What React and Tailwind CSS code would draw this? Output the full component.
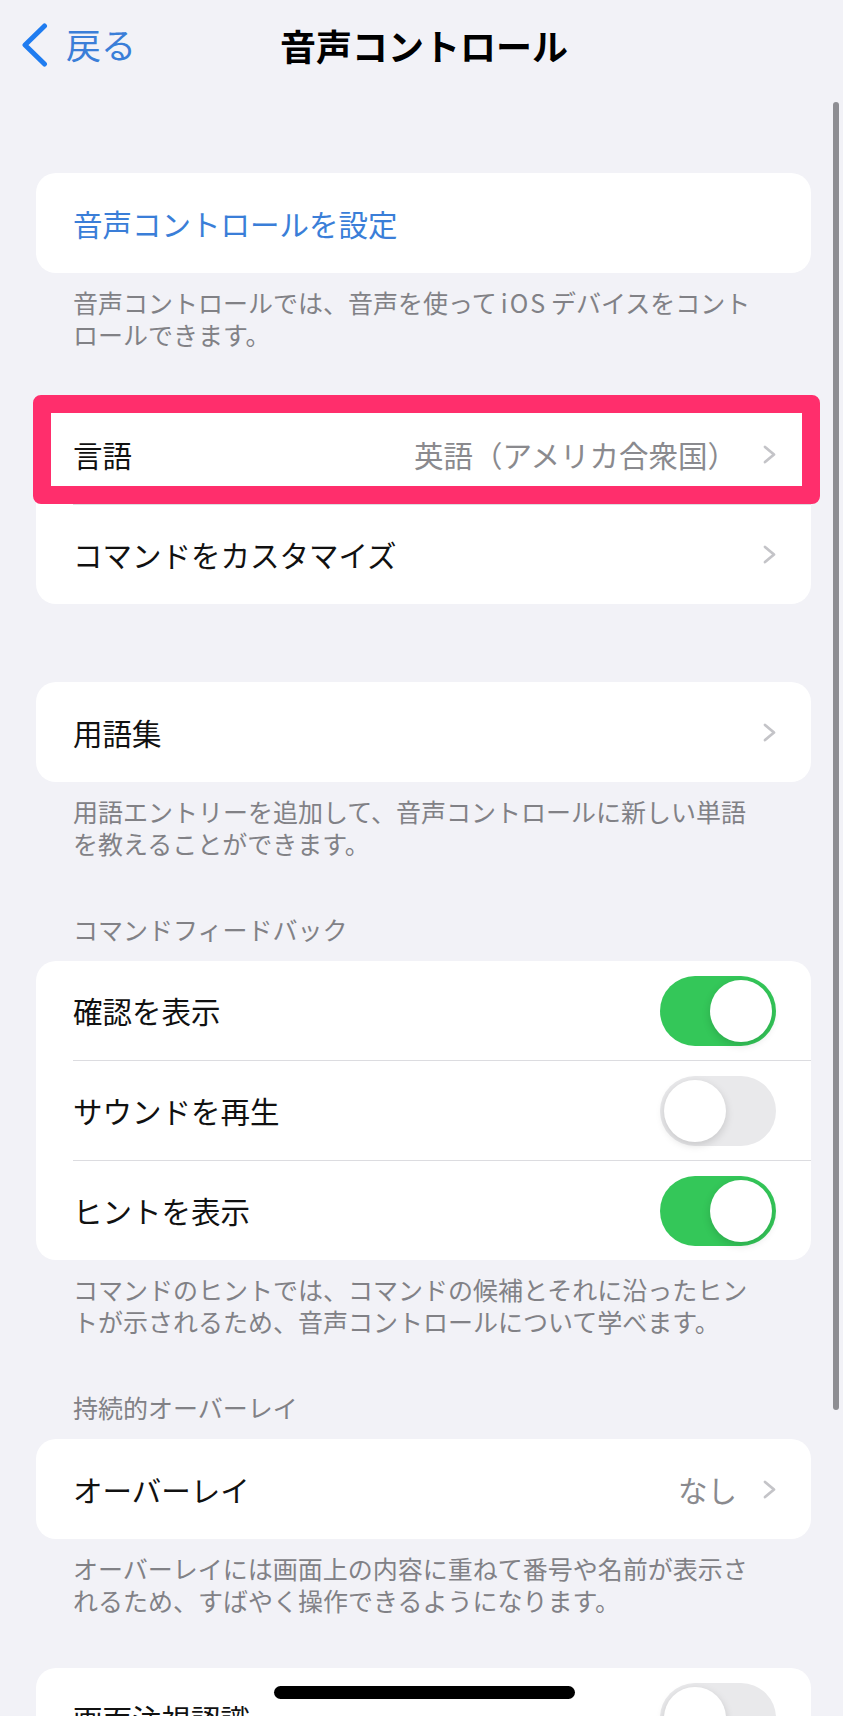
import React from "react";

function Chevron() {
  return (
    <svg width="13" height="19" viewBox="0 0 13 19" className="shrink-0">
      <path d="M2 2 L11 9.5 L2 17" fill="none" stroke="#c4c4c8" strokeWidth="2.8" strokeLinecap="round" strokeLinejoin="round" />
    </svg>
  );
}

function Toggle({ on }) {
  return on ? (
    <div className="flex h-[70px] w-[116px] shrink-0 items-center justify-end rounded-full bg-[#34c759] p-[4px]">
      <div className="h-[62px] w-[62px] rounded-full bg-white shadow-[0_3px_8px_rgba(0,0,0,0.15)]" />
    </div>
  ) : (
    <div className="flex h-[70px] w-[116px] shrink-0 items-center justify-start rounded-full bg-[#e9e9eb] p-[4px]">
      <div className="h-[62px] w-[62px] rounded-full bg-white shadow-[0_3px_8px_rgba(0,0,0,0.15)]" />
    </div>
  );
}

function Row({ label, value, chevron, toggle, blue, h = "h-[100px]" }) {
  return (
    <div className={`flex ${h} items-center justify-between pl-[37px] pr-[35px]`}>
      <span className={`whitespace-nowrap text-[29.5px] ${blue ? "text-[#3a7ed8]" : "text-[#111111]"}`}>{label}</span>
      <div className="flex items-center">
        {value && <span className="mr-[26px] whitespace-nowrap text-[29.5px] text-[#8a8a8e]">{value}</span>}
        {chevron && <Chevron />}
        {toggle !== undefined && <Toggle on={toggle} />}
      </div>
    </div>
  );
}

function Sep() {
  return <div className="ml-[37px] h-px bg-[#dcdce0]" />;
}

function Footer({ l1, l2 }) {
  return (
    <div className="pl-[73px] pt-[13px]">
      <p className="whitespace-nowrap text-[25px] leading-[32px] text-[#818186]">
        {l1}
        <br />
        {l2}
      </p>
    </div>
  );
}

function Header({ children }) {
  return (
    <div className="mb-[16px] pl-[73px] text-[25px] leading-[32px] text-[#818186] whitespace-nowrap">{children}</div>
  );
}

function Card({ children, className = "" }) {
  return <div className={`relative ml-[36px] w-[775px] rounded-[20px] bg-white ${className}`}>{children}</div>;
}

export default function App() {
  return (
    <div className="relative h-[1716px] overflow-hidden bg-[#f2f2f7] font-['Noto_Sans_CJK_JP','Noto_Sans',sans-serif]">
      {/* Nav bar */}
      <div className="grid h-[89px] grid-cols-[1fr_auto_1fr] items-center">
        <div className="flex items-center pl-[21px]">
          <svg width="27" height="44" viewBox="0 0 27 44">
            <path d="M23.5 3 L4 22 L23.5 41" fill="none" stroke="#1f7cf0" strokeWidth="5" strokeLinecap="round" strokeLinejoin="round" />
          </svg>
          <span className="ml-[18px] text-[35px] text-[#3a7ed8]">戻る</span>
        </div>
        <div className="pl-[5px] text-[36px] font-bold text-black">音声コントロール</div>
        <div />
      </div>

      {/* Section 1 */}
      <Card className="mt-[84px]">
        <Row label="音声コントロールを設定" blue />
      </Card>
      <Footer
        l1={
          <>
            音声コントロールでは、音声を使って<span className="px-[4px] tracking-[2px]">iOS</span>デバイスをコント
          </>
        }
        l2="ロールできます。"
      />

      {/* Section 2 */}
      <Card className="mt-[54px]">
        <Row label="言語" value="英語（アメリカ合衆国）" chevron />
        <Sep />
        <Row label="コマンドをカスタマイズ" chevron h="h-[99px]" />
        <div className="absolute -left-[3px] -top-[9px] h-[109px] w-[787px] rounded-[8px] border-[18px] border-[#ff2e6c]" />
      </Card>

      {/* Section 3 */}
      <Card className="mt-[78px]">
        <Row label="用語集" chevron />
      </Card>
      <Footer l1="用語エントリーを追加して、音声コントロールに新しい単語" l2="を教えることができます。" />

      {/* Section 4 */}
      <div className="mt-[54px]">
        <Header>コマンドフィードバック</Header>
        <Card>
          <Row label="確認を表示" toggle={true} h="h-[99px]" />
          <Sep />
          <Row label="サウンドを再生" toggle={false} h="h-[99px]" />
          <Sep />
          <Row label="ヒントを表示" toggle={true} h="h-[99px]" />
        </Card>
      </div>
      <Footer l1="コマンドのヒントでは、コマンドの候補とそれに沿ったヒン" l2="トが示されるため、音声コントロールについて学べます。" />

      {/* Section 5 */}
      <div className="mt-[54px]">
        <Header>持続的オーバーレイ</Header>
        <Card>
          <Row label="オーバーレイ" value="なし" chevron />
        </Card>
      </div>
      <Footer l1="オーバーレイには画面上の内容に重ねて番号や名前が表示さ" l2="れるため、すばやく操作できるようになります。" />

      {/* Section 6 */}
      <Card className="mt-[52px]">
        <Row label="画面注視認識" toggle={false} />
      </Card>

      {/* Scroll indicator */}
      <div className="absolute left-[833px] top-[102px] h-[1308px] w-[6px] rounded-full bg-[#8e8e93]" />
      {/* Home indicator */}
      <div className="absolute left-[274px] top-[1686px] h-[13px] w-[301px] rounded-full bg-black" />
    </div>
  );
}
